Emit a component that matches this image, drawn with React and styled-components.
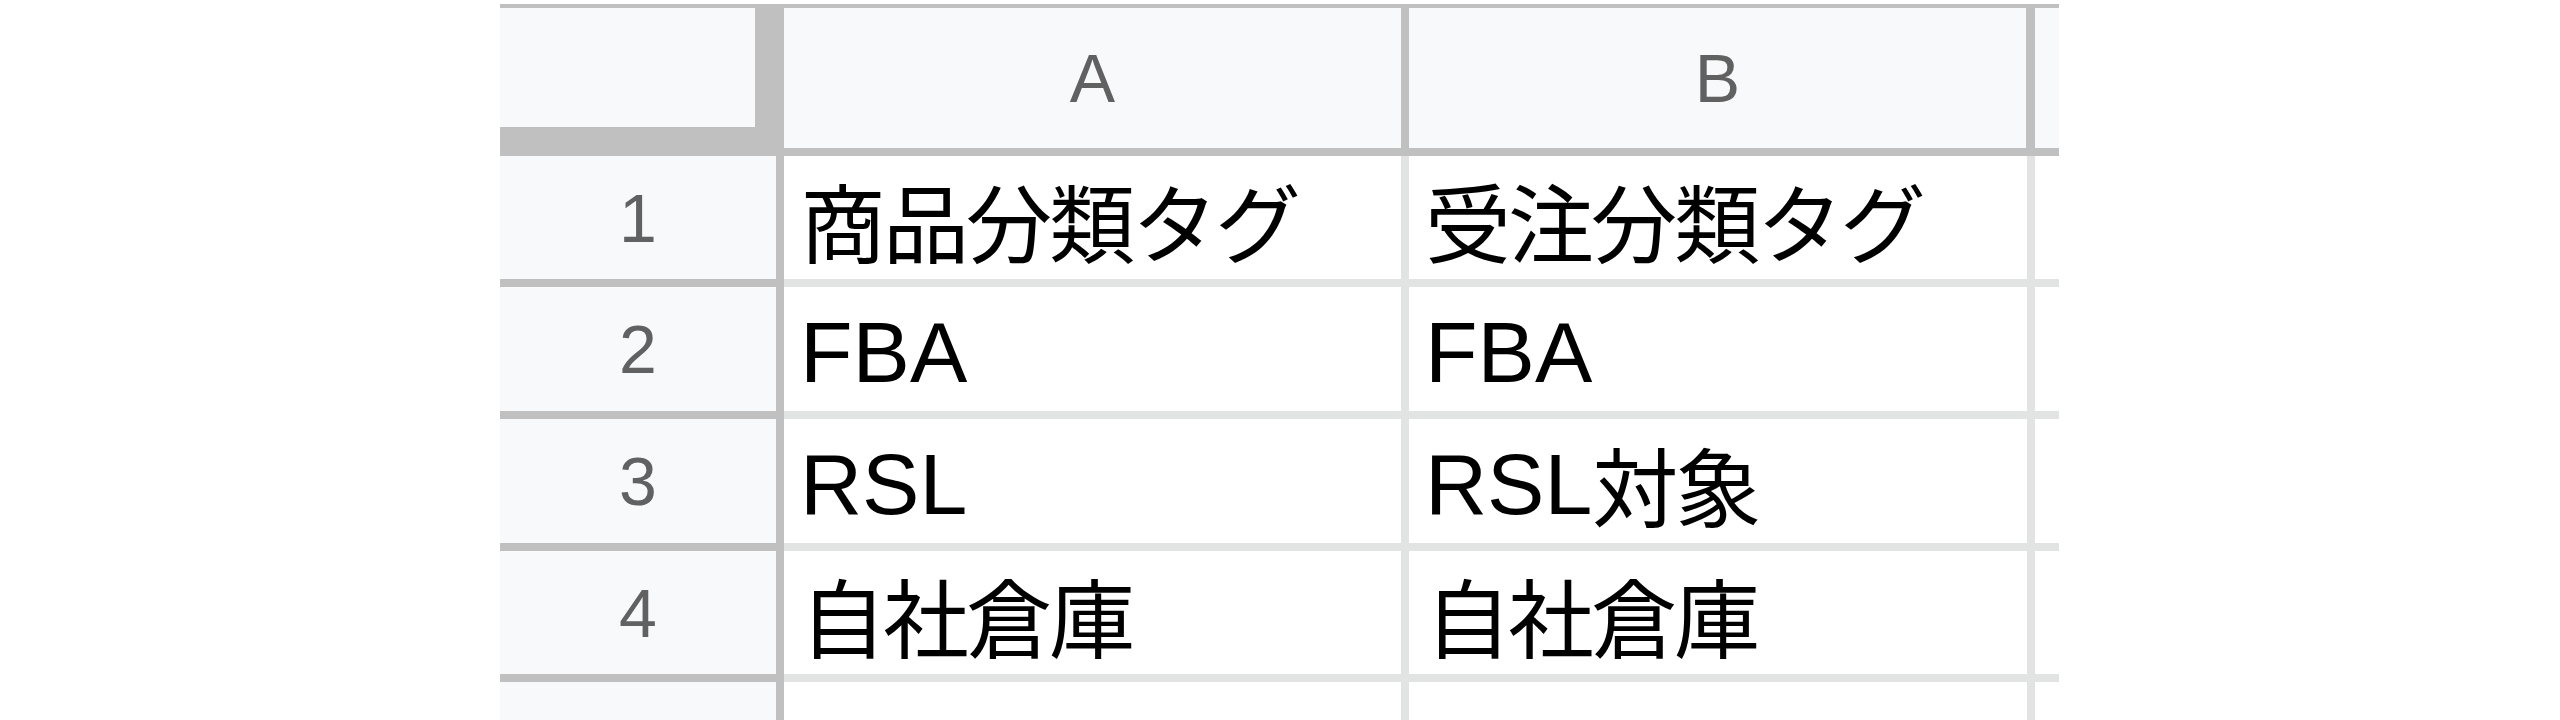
import styled, { createGlobalStyle } from "styled-components";

const GlobalStyle = createGlobalStyle`
  html, body {
    margin: 0;
    padding: 0;
    background: #ffffff;
    overflow: hidden;
  }
  body {
    font-family: "Liberation Sans", Arial, "Noto Sans CJK JP", sans-serif;
  }
`;

const HEAD_LINE = "#c0c0c0";
const GRID_LINE = "#e2e3e3";

const rows = [
  ["商品分類タグ", "受注分類タグ"],
  ["FBA", "FBA"],
  ["RSL", "RSL対象"],
  ["自社倉庫", "自社倉庫"],
];

// split a label into latin / japanese runs so each gets its own font
const splitRuns = (text) => text.match(/[\u3000-\u9fff]+|[^\u3000-\u9fff]+/g) || [];

const isJp = (run) => /[\u3000-\u9fff]/.test(run);

function CellText({ text }) {
  return splitRuns(text).map((run, i) =>
    isJp(run) ? <Jp key={i}>{run}</Jp> : <span key={i}>{run}</span>
  );
}

export default function App() {
  return (
    <>
      <GlobalStyle />
      <Sheet>
        <Corner />
        <ColHeader>A</ColHeader>
        <ColHeader wide>B</ColHeader>
        <ColHeader last />

        {rows.map((row, i) => (
          <Row key={i} index={i + 1} row={row} />
        ))}

        <RowHeader noBorder />
        <Cell noBorder />
        <Cell noBorder />
        <Cell noBorder last />
      </Sheet>
    </>
  );
}

function Row({ index, row }) {
  return (
    <>
      <RowHeader>{index}</RowHeader>
      <Cell>
        <CellText text={row[0]} />
      </Cell>
      <Cell>
        <CellText text={row[1]} />
      </Cell>
      <Cell last />
    </>
  );
}

const Sheet = styled.div`
  margin: 4px 0 0 500px;
  width: 1559px;
  border-top: 4px solid ${HEAD_LINE};
  display: grid;
  grid-template-columns: 284px 625px 626px 24px;
  grid-template-rows: 148px 131px 132px 132px 131px 38px;

  & > * {
    box-sizing: border-box;
    min-width: 0;
    overflow: hidden;
  }
`;

const Corner = styled.div`
  background: #f8f9fa;
  border-right: 29px solid ${HEAD_LINE};
  border-bottom: 29px solid ${HEAD_LINE};
`;

const ColHeader = styled.div`
  display: flex;
  align-items: center;
  justify-content: center;
  background: #f8f9fa;
  border-bottom: 8px solid ${HEAD_LINE};
  border-right: ${({ last, wide }) => (last ? "none" : `${wide ? 9 : 8}px solid ${HEAD_LINE}`)};
  color: #616161;
  font-size: 68px;
  line-height: 1;
`;

const RowHeader = styled.div`
  display: flex;
  align-items: center;
  justify-content: center;
  background: #f8f9fa;
  border-right: 8px solid ${HEAD_LINE};
  border-bottom: ${({ noBorder }) => (noBorder ? "none" : `8px solid ${HEAD_LINE}`)};
  color: #616161;
  font-size: 68px;
  line-height: 1;
`;

const Cell = styled.div`
  display: flex;
  align-items: flex-end;
  padding: 0 0 16px 16px;
  background: #ffffff;
  border-right: ${({ last }) => (last ? "none" : `8px solid ${GRID_LINE}`)};
  border-bottom: ${({ noBorder }) => (noBorder ? "none" : `8px solid ${GRID_LINE}`)};
  color: #000000;
  font-size: 86px;
  line-height: 1;
  white-space: nowrap;
`;

const Jp = styled.span`
  font-family: "Noto Sans CJK JP", sans-serif;
  font-size: 86px;
  letter-spacing: -3px;
  line-height: 1;
  vertical-align: 5px;
`;
